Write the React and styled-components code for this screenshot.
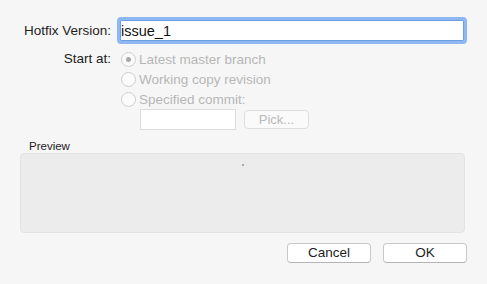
import React from "react";
import styled, { createGlobalStyle } from "styled-components";

const Global = createGlobalStyle`
  html, body { margin: 0; padding: 0; background: #f6f6f6; }
  body { font-family: "Liberation Sans", Arial, sans-serif; -webkit-font-smoothing: antialiased; }
`;

const Dialog = styled.div`
  width: 487px;
  height: 284px;
  box-sizing: border-box;
  padding: 17px 20px 0 20px;
  background: #f6f6f6;
  display: flex;
  flex-direction: column;
`;

const FormGrid = styled.div`
  display: grid;
  grid-template-columns: 91px 1fr;
  column-gap: 6px;
  row-gap: 5px;
  align-items: start;
`;

const Label = styled.div`
  font-size: 13.5px;
  color: #1d1d1d;
  text-align: right;
  height: ${(p) => p.$h}px;
  line-height: ${(p) => p.$h}px;
  white-space: nowrap;
`;

const TextInput = styled.input`
  box-sizing: border-box;
  width: 350px;
  height: 27px;
  margin: 0;
  padding: 0 0 0 1px;
  border: 3px solid #8fb8f2;
  border-radius: 4px;
  box-shadow: inset 0 0 0 1px #6b9fe8;
  background: #fff;
  font-family: inherit;
  font-size: 14.5px;
  color: #111;
  outline: none;
`;

const RadioGroup = styled.div`
  display: flex;
  flex-direction: column;
`;

const RadioRow = styled.div`
  display: flex;
  align-items: center;
  height: 20px;
  padding-left: 4px;
  gap: 3px;
`;

const RadioCircle = styled.span`
  box-sizing: border-box;
  width: 15px;
  height: 15px;
  border-radius: 50%;
  border: 1px solid #cdcdcd;
  background: #fbfbfb;
  display: flex;
  align-items: center;
  justify-content: center;
  &::after {
    content: "";
    display: ${(p) => (p.$checked ? "block" : "none")};
    width: 5px;
    height: 5px;
    border-radius: 50%;
    background: #a8a8a8;
  }
`;

const RadioText = styled.span`
  font-size: 13.5px;
  color: #b6b6b6;
  white-space: nowrap;
`;

const CommitRow = styled.div`
  display: flex;
  align-items: center;
  gap: 8px;
  padding-left: 23px;
  height: 21px;
`;

const SmallField = styled.div`
  box-sizing: border-box;
  width: 96px;
  height: 21px;
  border: 1px solid #dcdcdc;
  background: #fff;
`;

const PickButton = styled.div`
  box-sizing: border-box;
  width: 65px;
  height: 19px;
  border: 1px solid #dedede;
  border-radius: 4px;
  background: #fafafa;
  color: #b9b9b9;
  font-size: 13px;
  text-align: center;
  line-height: 17px;
`;

const PreviewSection = styled.div`
  margin-top: 9px;
  display: flex;
  flex-direction: column;
`;

const PreviewLabel = styled.div`
  font-size: 11.5px;
  color: #222;
  height: 14px;
  line-height: 14px;
  padding-left: 9px;
`;

const PreviewBox = styled.div`
  box-sizing: border-box;
  width: 445px;
  height: 80px;
  border: 1px solid #e4e4e4;
  border-radius: 4px;
  background: #ececec;
  position: relative;
`;

const Dot = styled.span`
  position: absolute;
  left: 221px;
  top: 10px;
  width: 2px;
  height: 2px;
  background: #a9a9a9;
`;

const ButtonBar = styled.div`
  margin-top: 10px;
  display: flex;
  justify-content: flex-end;
  gap: 12px;
`;

const Button = styled.button`
  box-sizing: border-box;
  width: 84px;
  height: 20px;
  margin: 0;
  padding: 0;
  border: 1px solid #c8c8c8;
  border-bottom-color: #b4b4b4;
  border-radius: 4px;
  background: #fff;
  font-family: inherit;
  font-size: 13.5px;
  color: #1d1d1d;
  line-height: 18px;
`;

export default function App() {
  return (
    <>
      <Global />
      <Dialog>
        <FormGrid>
          <Label $h={27}>Hotfix Version:</Label>
          <TextInput defaultValue="issue_1" />
          <Label $h={20}>Start at:</Label>
          <RadioGroup>
            <RadioRow>
              <RadioCircle $checked />
              <RadioText>Latest master branch</RadioText>
            </RadioRow>
            <RadioRow>
              <RadioCircle />
              <RadioText>Working copy revision</RadioText>
            </RadioRow>
            <RadioRow>
              <RadioCircle />
              <RadioText>Specified commit:</RadioText>
            </RadioRow>
            <CommitRow>
              <SmallField />
              <PickButton>Pick...</PickButton>
            </CommitRow>
          </RadioGroup>
        </FormGrid>
        <PreviewSection>
          <PreviewLabel>Preview</PreviewLabel>
          <PreviewBox>
            <Dot />
          </PreviewBox>
        </PreviewSection>
        <ButtonBar>
          <Button>Cancel</Button>
          <Button>OK</Button>
        </ButtonBar>
      </Dialog>
    </>
  );
}
